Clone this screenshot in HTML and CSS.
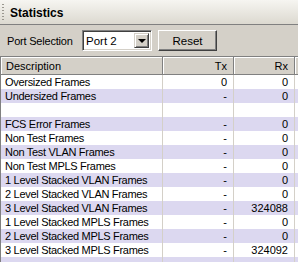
FILE: index.html
```html
<html>
<head>
    <link rel="stylesheet" href="styles.css">
</head>
<body>
    <div class="panel">
        <div class="title">
            <span class="grip"></span>
            <span class="title-text">Statistics</span>
        </div>

        <div class="toolbar">
            <span class="label">Port Selection</span>
            <div class="combo">
                <span class="combo-value">Port 2</span>
                <span class="combo-btn"><span class="arrow"></span></span>
            </div>
            <button class="btn">Reset</button>
        </div>

        <div class="table">
            <div class="head">Description</div>
            <div class="head num">Tx</div>
            <div class="head num">Rx</div>
            <div class="head last"></div>

            <div class="cell">Oversized Frames</div><div class="cell num">0</div><div class="cell num">0</div><div class="cell last"></div>
            <div class="cell alt">Undersized Frames</div><div class="cell alt num">-</div><div class="cell alt num">0</div><div class="cell alt last"></div>
            <div class="cell"></div><div class="cell num"></div><div class="cell num"></div><div class="cell last"></div>
            <div class="cell alt">FCS Error Frames</div><div class="cell alt num">-</div><div class="cell alt num">0</div><div class="cell alt last"></div>
            <div class="cell">Non Test Frames</div><div class="cell num">-</div><div class="cell num">0</div><div class="cell last"></div>
            <div class="cell alt">Non Test VLAN Frames</div><div class="cell alt num">-</div><div class="cell alt num">0</div><div class="cell alt last"></div>
            <div class="cell">Non Test MPLS Frames</div><div class="cell num">-</div><div class="cell num">0</div><div class="cell last"></div>
            <div class="cell alt">1 Level Stacked VLAN Frames</div><div class="cell alt num">-</div><div class="cell alt num">0</div><div class="cell alt last"></div>
            <div class="cell">2 Level Stacked VLAN Frames</div><div class="cell num">-</div><div class="cell num">0</div><div class="cell last"></div>
            <div class="cell alt">3 Level Stacked VLAN Frames</div><div class="cell alt num">-</div><div class="cell alt num">324088</div><div class="cell alt last"></div>
            <div class="cell">1 Level Stacked MPLS Frames</div><div class="cell num">-</div><div class="cell num">0</div><div class="cell last"></div>
            <div class="cell alt">2 Level Stacked MPLS Frames</div><div class="cell alt num">-</div><div class="cell alt num">0</div><div class="cell alt last"></div>
            <div class="cell">3 Level Stacked MPLS Frames</div><div class="cell num">-</div><div class="cell num">324092</div><div class="cell last"></div>
            <div class="cell alt"></div><div class="cell alt num"></div><div class="cell alt num"></div><div class="cell alt last"></div>
        </div>
    </div>
</body>
</html>
```

FILE: styles.css
```css
body {
    margin: 0;
    font-family: "Liberation Sans", Arial, sans-serif;
    font-size: 11px;
    color: #000;
    background: #d4d0c8;
    overflow: hidden;
}
.panel {
    width: 298px;
    height: 262px;
    overflow: hidden;
}
.title {
    height: 24px;
    border-bottom: 1px solid #808080;
    background: linear-gradient(#f6f5f1, #dcd9d0);
    display: flex;
    align-items: center;
}
.grip {
    width: 2px;
    height: 16px;
    margin-left: 2px;
    background: repeating-linear-gradient(#9a978f 0 1px, transparent 1px 3px);
}
.title-text {
    margin-left: 6px;
    font-weight: bold;
    font-size: 12px;
    margin-top: 1px;
}
.toolbar {
    height: 31px;
    display: flex;
    align-items: center;
    padding-left: 7px;
    border-bottom: 1px solid #808080;
}
.label {
    width: 75px;
    letter-spacing: -0.2px;
}
.combo {
    width: 70px;
    height: 21px;
    box-sizing: border-box;
    background: #fff;
    border: 1px solid;
    border-color: #808080 #fff #fff #808080;
    box-shadow: inset 1px 1px #404040, inset -1px -1px #d4d0c8;
    display: flex;
    align-items: center;
    padding: 2px;
}
.combo-value {
    flex: 1;
    padding-left: 1px;
    font-size: 11.5px;
}
.combo-btn {
    width: 15px;
    height: 15px;
    box-sizing: border-box;
    background: #d4d0c8;
    border: 1px solid;
    border-color: #d4d0c8 #404040 #404040 #d4d0c8;
    box-shadow: inset 1px 1px #fff, inset -1px -1px #808080;
    display: flex;
    align-items: center;
    justify-content: center;
}
.arrow {
    width: 0;
    height: 0;
    border-left: 4px solid transparent;
    border-right: 4px solid transparent;
    border-top: 4px solid #000;
    margin-top: 1px;
}
.btn {
    margin-left: 6px;
    width: 59px;
    height: 21px;
    padding: 0;
    font-family: "Liberation Sans", Arial, sans-serif;
    font-size: 11.5px;
    color: #000;
    background: #d4d0c8;
    border: 1px solid;
    border-color: #fff #404040 #404040 #fff;
    box-shadow: inset -1px -1px #808080;
}
.table {
    display: grid;
    grid-template-columns: 162px 71px 61px 1fr;
    grid-template-rows: 18px;
    grid-auto-rows: 14px;
    border-left: 1px solid #808080;
}
.head {
    height: 18px;
    box-sizing: border-box;
    background: #d4d0c8;
    border-right: 1px solid #808080;
    border-bottom: 1px solid #808080;
    box-shadow: inset 1px 1px #fff;
    padding: 2px 6px 0 5px;
    line-height: 14px;
}
.cell {
    box-sizing: border-box;
    background: #fff;
    border-right: 1px solid #d4d0c8;
    padding: 0 6px 0 4px;
    line-height: 14px;
    white-space: nowrap;
    overflow: hidden;
    letter-spacing: -0.3px;
}
.alt {
    background: #dcd8f0;
}
.num {
    text-align: right;
    letter-spacing: 0;
}
.last {
    border-right: none;
}
```
